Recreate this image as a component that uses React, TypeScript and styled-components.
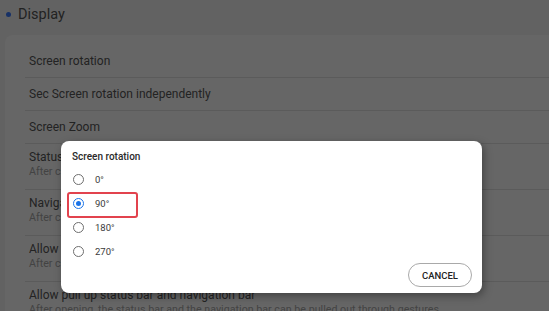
import React from "react";
import styled, { createGlobalStyle } from "styled-components";

const Global = createGlobalStyle`
  html, body { margin: 0; padding: 0; }
  body {
    width: 549px;
    height: 311px;
    overflow: hidden;
    background: #f5f5f5;
    font-family: Roboto, "Noto Sans", Arial, sans-serif;
  }
`;

const Page = styled.div`
  position: relative;
  width: 549px;
  height: 311px;
  overflow: hidden;
`;

const Header = styled.div`
  display: flex;
  align-items: center;
  gap: 7px;
  height: 28px;
  padding-left: 6px;
  font-size: 14.5px;
  color: #555;
`;

const Dot = styled.span`
  width: 5px;
  height: 5px;
  border-radius: 50%;
  background: #3a7bff;
`;

const Card = styled.div`
  margin: 7px -20px 0 5px;
  padding-top: 10px;
  background: #ffffff;
  border-radius: 8px;
`;

const Row = styled.div<{ $two?: boolean }>`
  margin-left: 20px;
  border-bottom: 1px solid #e4e4e4;
  padding: ${(p) => (p.$two ? "6px 0 10px 4px" : "0 0 0 4px")};
  height: ${(p) => (p.$two ? "auto" : "32px")};
  display: flex;
  flex-direction: column;
  justify-content: center;
`;

const Title = styled.div`
  font-size: 12px;
  line-height: 15px;
  color: #585858;
  white-space: nowrap;
`;

const Sub = styled.div`
  font-size: 10.7px;
  line-height: 14px;
  color: #a8a8a8;
  white-space: nowrap;
`;

const Scrim = styled.div`
  position: absolute;
  inset: 0;
  background: rgba(0, 0, 0, 0.6);
`;

const Dialog = styled.div`
  position: absolute;
  left: 61px;
  top: 141px;
  width: 421px;
  background: #ffffff;
  border-radius: 8px;
  box-shadow: 2px 3px 8px rgba(0, 0, 0, 0.35);
  padding-top: 9px;
  padding-bottom: 6px;
`;

const DialogTitle = styled.div`
  padding-left: 11px;
  font-size: 10px;
  line-height: 14px;
  font-weight: 500;
  color: #2a2a2a;
`;

const Options = styled.div`
  margin-top: 3px;
  display: flex;
  flex-direction: column;
`;

const Option = styled.div`
  position: relative;
  height: 24px;
  display: flex;
  align-items: center;
  gap: 11px;
  padding-left: 12px;
  font-size: 9.5px;
  color: #3a3a3a;
`;

const Radio = styled.span<{ $checked?: boolean }>`
  box-sizing: border-box;
  width: 11px;
  height: 11px;
  border-radius: 50%;
  border: 1.5px solid ${(p) => (p.$checked ? "#1a73e8" : "#6e6e6e")};
  display: flex;
  align-items: center;
  justify-content: center;
  &::after {
    content: "";
    display: ${(p) => (p.$checked ? "block" : "none")};
    width: 5px;
    height: 5px;
    border-radius: 50%;
    background: #1a73e8;
  }
`;

const Highlight = styled.span`
  position: absolute;
  left: 6px;
  top: 1px;
  width: 71px;
  height: 26px;
  box-sizing: border-box;
  border: 2px solid #e2434e;
  border-radius: 3px;
`;

const Footer = styled.div`
  display: flex;
  justify-content: flex-end;
  padding-right: 10px;
`;

const CancelButton = styled.button`
  box-sizing: border-box;
  width: 64px;
  height: 24px;
  border-radius: 12px;
  border: 1px solid #a9a9a9;
  background: #fff;
  font-family: Roboto, Arial, sans-serif;
  font-size: 9.5px;
  font-weight: 500;
  color: #222;
  padding: 0;
`;

const rows = [
  { title: "Screen rotation" },
  { title: "Sec Screen rotation independently" },
  { title: "Screen Zoom" },
  { title: "Status bar", sub: "After closing, the status bar will be hidden" },
  { title: "Navigation bar", sub: "After closing, the navigation bar will be hidden" },
  { title: "Allow pull down notification bar", sub: "After closing, the notification bar cannot be pulled down" },
  {
    title: "Allow pull up status bar and navigation bar",
    sub: "After opening, the status bar and the navigation bar can be pulled out through gestures",
  },
];

const options = ["0°", "90°", "180°", "270°"];

export default function App() {
  return (
    <>
      <Global />
      <Page>
        <Header>
          <Dot />
          Display
        </Header>
        <Card>
          {rows.map((r) => (
            <Row key={r.title} $two={!!r.sub}>
              <Title>{r.title}</Title>
              {r.sub && <Sub>{r.sub}</Sub>}
            </Row>
          ))}
        </Card>
        <Scrim />
        <Dialog>
          <DialogTitle>Screen rotation</DialogTitle>
          <Options>
            {options.map((o) => (
              <Option key={o}>
                <Radio $checked={o === "90°"} />
                {o}
                {o === "90°" && <Highlight />}
              </Option>
            ))}
          </Options>
          <Footer>
            <CancelButton>CANCEL</CancelButton>
          </Footer>
        </Dialog>
      </Page>
    </>
  );
}
